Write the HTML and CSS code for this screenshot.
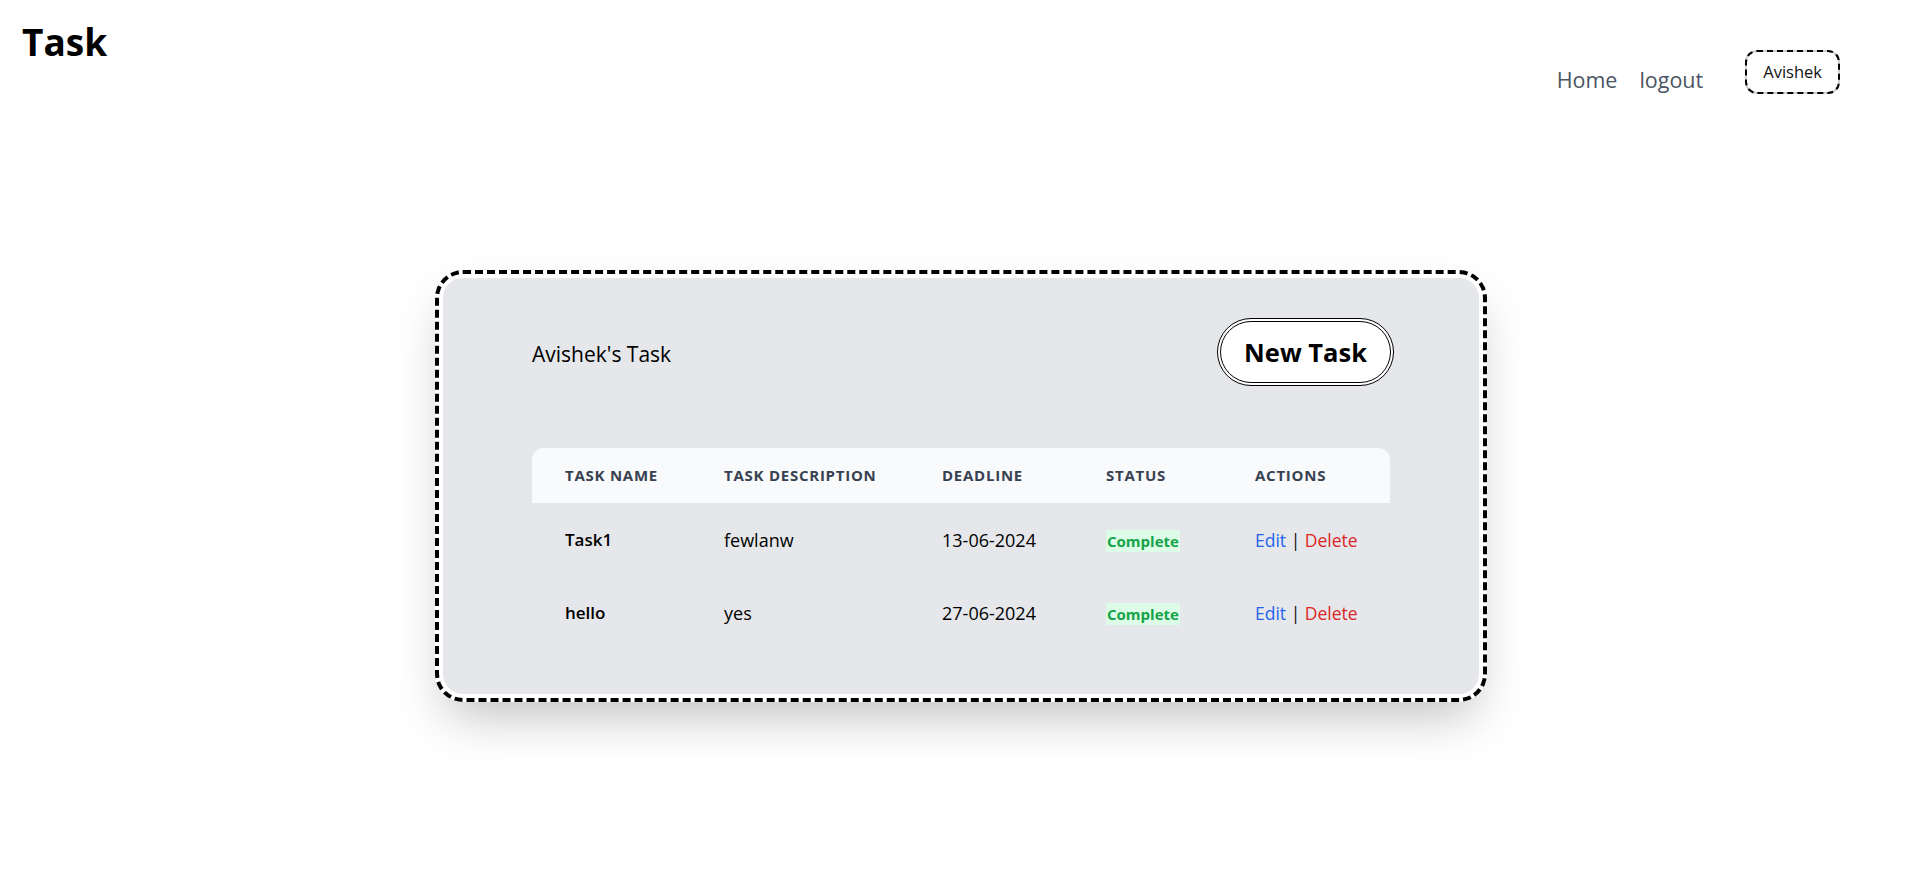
FILE: index.html
```html
<!DOCTYPE html>
<html lang="en">
<head>
<meta charset="utf-8">
<title>Task</title>
<link rel="stylesheet" href="styles.css">
</head>
<body>
<header class="topbar">
  <h1 class="brand">Task</h1>
  <nav class="nav">
    <a class="nav-link" href="#">Home</a>
    <a class="nav-link" href="#">logout</a>
    <span class="user-chip">Avishek</span>
  </nav>
</header>
<main class="main">
  <section class="card-frame">
    <div class="card">
      <div class="card-head">
        <h2 class="card-title">Avishek's Task</h2>
        <button class="new-btn" type="button">New Task</button>
      </div>
      <table class="tasks">
        <thead>
          <tr>
            <th class="col-name">Task Name</th>
            <th class="col-desc">Task Description</th>
            <th class="col-date">Deadline</th>
            <th class="col-status">Status</th>
            <th class="col-actions">Actions</th>
          </tr>
        </thead>
        <tbody>
          <tr>
            <td class="task-name">Task1</td>
            <td>fewlanw</td>
            <td>13-06-2024</td>
            <td><span class="badge">Complete</span></td>
            <td class="actions"><a class="edit" href="#">Edit</a> <span class="sep">|</span> <a class="delete" href="#">Delete</a></td>
          </tr>
          <tr>
            <td class="task-name">hello</td>
            <td>yes</td>
            <td>27-06-2024</td>
            <td><span class="badge">Complete</span></td>
            <td class="actions"><a class="edit" href="#">Edit</a> <span class="sep">|</span> <a class="delete" href="#">Delete</a></td>
          </tr>
        </tbody>
      </table>
    </div>
  </section>
</main>
</body>
</html>
```
FILE: styles.css
```css
* { box-sizing: border-box; }

html, body {
  margin: 0;
  padding: 0;
  background: #ffffff;
  font-family: "Open Sans", "Noto Sans", "Liberation Sans", sans-serif;
  color: #000;
}

.topbar {
  display: flex;
  justify-content: space-between;
  align-items: flex-start;
  padding: 0 78px 0 22px;
}

.brand {
  margin: 22px 0 0;
  font-size: 37px;
  line-height: 40px;
  font-weight: 700;
}

.nav {
  display: flex;
  align-items: flex-end;
  margin-top: 50px;
}

.nav-link {
  font-size: 21.5px;
  line-height: 28px;
  color: #4b5563;
  text-decoration: none;
  margin-right: 22px;
}

.nav-link + .nav-link {
  margin-right: 42px;
}

.user-chip {
  display: inline-block;
  font-size: 16.5px;
  line-height: 24px;
  padding: 8px 16px;
  border: 2px dashed #000;
  border-radius: 12px;
  background: linear-gradient(#fff, #fff) padding-box, linear-gradient(#cbd0d8, #cbd0d8) border-box;
  color: #111;
}

.main {
  padding: 176px 0 150px 4px;
}

.card-frame {
  width: 1052px;
  margin: 0 auto;
  border: 4px dashed #000;
  border-radius: 28px;
  padding: 4px;
  background: #fff;
  box-shadow: 0 25px 50px -12px rgba(0, 0, 0, 0.25);
}

.card {
  background: #e5e7eb;
  border-radius: 20px;
  padding: 40px 89px 45px 89px;
}

.card-head {
  display: flex;
  justify-content: space-between;
  align-items: center;
  margin-right: -4px;
  margin-bottom: 62px;
}

.card-title {
  margin: 0;
  padding-top: 3px;
  font-size: 21px;
  font-weight: 400;
  line-height: 28px;
}

.new-btn {
  font-family: inherit;
  font-size: 25.5px;
  font-weight: 700;
  line-height: 32px;
  padding: 14px 23px;
  border: 4px double #000;
  border-radius: 9999px;
  background: #fff;
  color: #000;
}

.tasks {
  width: 858px;
  border-collapse: separate;
  border-spacing: 0;
  table-layout: fixed;
}

.tasks th {
  background: #f9fafb;
  text-align: left;
  text-transform: uppercase;
  font-size: 15px;
  font-weight: 700;
  letter-spacing: 0.05em;
  line-height: 21px;
  padding: 17px 0 17px 33px;
  color: #374151;
}

.tasks th:first-child { border-top-left-radius: 12px; }
.tasks th:last-child { border-top-right-radius: 12px; }

.col-name { width: 159px; }
.col-desc { width: 218px; }
.col-date { width: 164px; }
.col-status { width: 149px; }
.col-actions { width: 168px; }

.tasks td {
  font-size: 18px;
  line-height: 24px;
  padding: 24px 0 24px 33px;
  color: #000;
  white-space: nowrap;
}

.tasks td.task-name {
  font-size: 17px;
  font-weight: 600;
}

.tasks td.actions {
  font-size: 17.5px;
}

.badge {
  display: inline-block;
  background: #dcfce7;
  color: #16a34a;
  font-size: 15px;
  font-weight: 700;
  line-height: 22px;
  padding: 0 1px;
  vertical-align: middle;
}

.edit {
  color: #2563eb;
  text-decoration: none;
}

.delete {
  color: #dc2626;
  text-decoration: none;
}

.sep {
  color: #111;
}
```
